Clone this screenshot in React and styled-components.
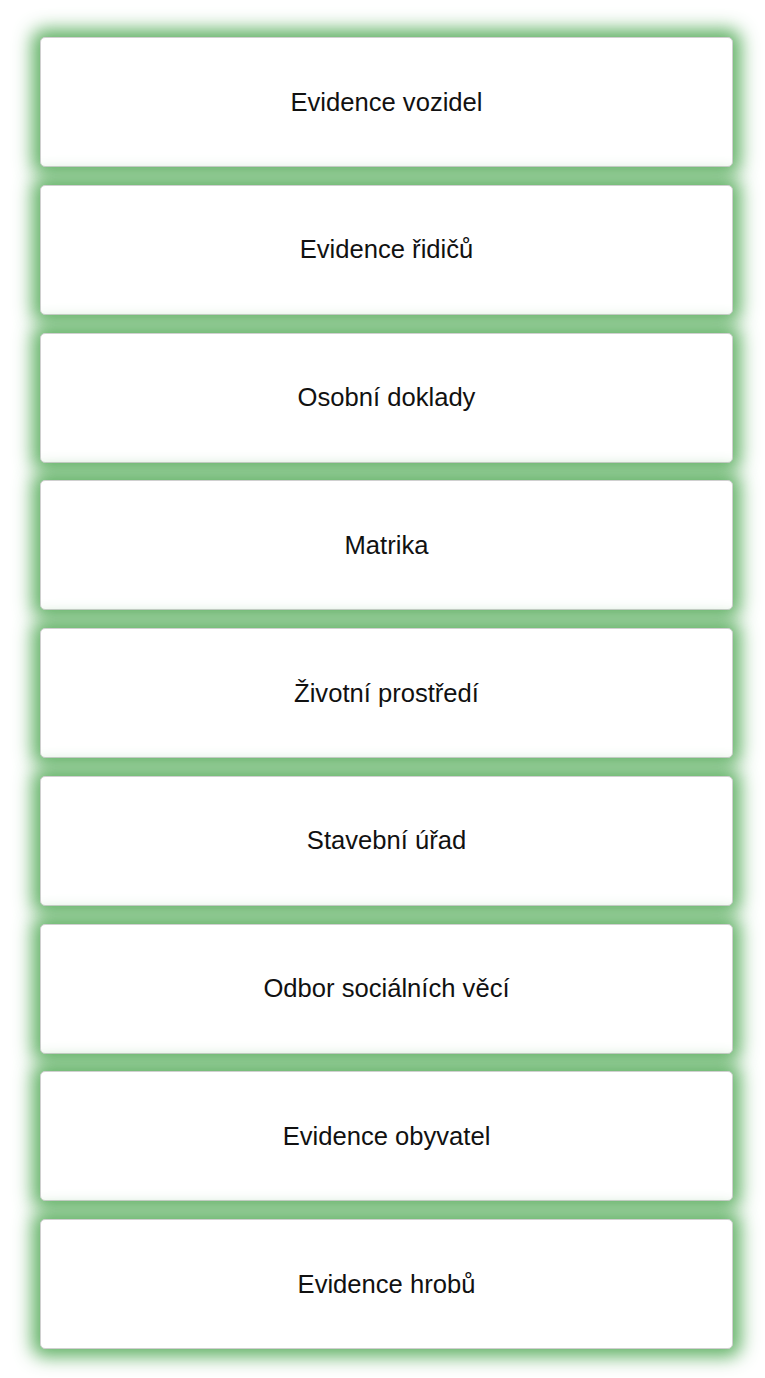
import React from 'react';
import styled, { createGlobalStyle } from 'styled-components';

const GlobalStyle = createGlobalStyle`
  body {
    margin: 0;
    background: #fff;
    font-family: "Liberation Sans", Arial, sans-serif;
  }
`;

const List = styled.div`
  display: flex;
  flex-direction: column;
  gap: 17.75px;
  padding: 37px 32px 28px 40px;
`;

const Card = styled.div`
  height: 130px;
  display: flex;
  align-items: center;
  justify-content: center;
  background: #fff;
  border: 1px solid #d0d0d0;
  border-radius: 5px;
  box-sizing: border-box;
  box-shadow: 0 0 18px 8px rgba(70, 165, 75, 0.85);
  font-size: 25.6px;
  color: #111;
  cursor: pointer;
`;

const items = [
  'Evidence vozidel',
  'Evidence řidičů',
  'Osobní doklady',
  'Matrika',
  'Životní prostředí',
  'Stavební úřad',
  'Odbor sociálních věcí',
  'Evidence obyvatel',
  'Evidence hrobů'
];

const App = () => (
  <>
    <GlobalStyle />
    <List>
      {items.map(label => (
        <Card key={label}>{label}</Card>
      ))}
    </List>
  </>
);

export default App;
